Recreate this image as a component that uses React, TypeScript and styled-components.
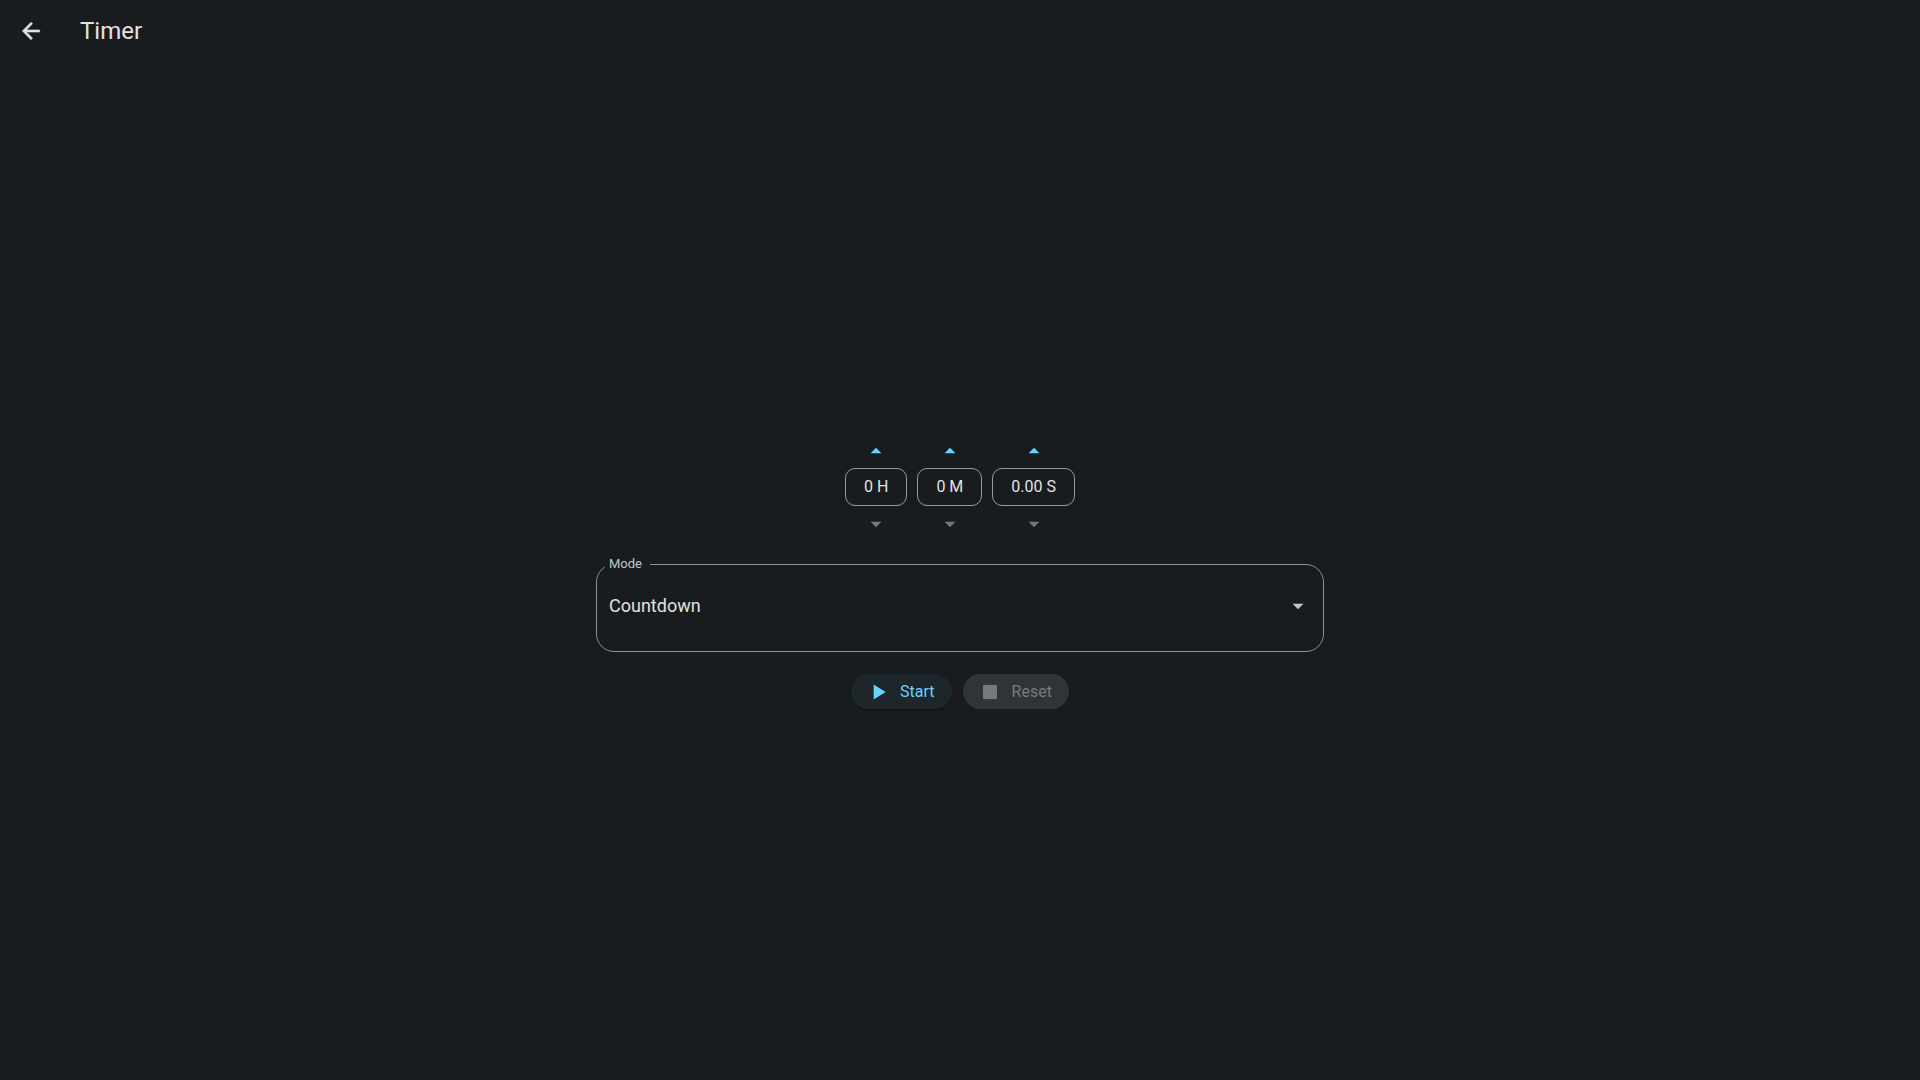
import React, { useState } from "react";
import styled, { createGlobalStyle } from "styled-components";

const GlobalStyle = createGlobalStyle`
  * { box-sizing: border-box; }
  body {
    margin: 0;
    background: #191c1e;
    color: #e1e2e4;
    font-family: Roboto, "Liberation Sans", sans-serif;
  }
  button, select { font: inherit; color: inherit; }
`;

const Page = styled.div`
  min-height: 100vh;
  display: flex;
  flex-direction: column;
`;

const AppBar = styled.header`
  height: 62px;
  padding: 0 18px;
  display: flex;
  align-items: center;
  gap: 36px;
`;

const Title = styled.h1`
  margin: 0;
  font-size: 24px;
  line-height: 32px;
  font-weight: 400;
`;

const IconButton = styled.button`
  display: flex;
  padding: 0;
  border: 0;
  background: none;
  cursor: pointer;
`;

const Content = styled.main`
  flex: 1;
  display: flex;
  flex-direction: column;
  align-items: center;
  justify-content: center;
`;

const Units = styled.div`
  display: flex;
  gap: 10px;
  margin-bottom: 15px;
`;

const Unit = styled.div`
  display: flex;
  flex-direction: column;
  align-items: center;
`;

const StepButton = styled.button`
  width: 36px;
  height: 35px;
  padding: 0;
  border: 0;
  background: none;
  color: #67d3ff;
  display: flex;
  align-items: center;
  justify-content: center;
  cursor: pointer;
  &:disabled { color: #75777a; cursor: default; }
`;

const ValueButton = styled.button`
  height: 38px;
  padding: 0 18px;
  border: 1px solid #949ca0;
  border-radius: 10px;
  background: none;
  font-size: 16px;
  line-height: 20px;
  cursor: pointer;
`;

const Field = styled.fieldset`
  width: 38%;
  min-width: 280px;
  max-width: 728px;
  margin: 0 0 22px;
  padding: 0 8px;
  border: 1px solid #8a9296;
  border-radius: 18px;
  color: #e1e2e4;
`;

const Legend = styled.legend`
  padding: 0 8px 0 4px;
  font-size: 13px;
  line-height: 16px;
  color: #bfc8cc;
`;

const SelectBox = styled.div`
  display: grid;
  align-items: center;
  height: 79px;
  padding-bottom: 12px;
  color: #c3c7c9;
  > * { grid-area: 1 / 1; }
  svg {
    justify-self: end;
    margin-right: 4px;
    pointer-events: none;
  }
`;

const Select = styled.select`
  width: 100%;
  height: 48px;
  padding: 0 4px;
  border: 0;
  background: #191c1e;
  color: #e1e2e4;
  appearance: none;
  font-size: 18px;
  line-height: 24px;
`;

const Actions = styled.div`
  display: flex;
  gap: 11px;
`;

const ActionButton = styled.button`
  height: 35px;
  padding: 0 17px 0 14px;
  border: 0;
  border-radius: 18px;
  display: flex;
  align-items: center;
  gap: 9px;
  background: #1d262b;
  color: #67d3ff;
  font-size: 16px;
  line-height: 20px;
  box-shadow: 0 1px 2px rgba(0, 0, 0, 0.3);
  cursor: pointer;
  &:disabled {
    background: #313436;
    color: #777a7b;
    box-shadow: none;
    cursor: default;
  }
`;

const ICONS = {
  back: "M20 11H7.83l5.59-5.59L12 4l-8 8 8 8 1.41-1.41L7.83 13H20v-2z",
  up: "M7 14l5-5 5 5z",
  down: "M7 10l5 5 5-5z",
  play: "M8 5v14l11-7z",
  stop: "M5.5 5.5h13v13h-13z",
};

function Icon({ name, size = 26 }: { name: keyof typeof ICONS; size?: number }) {
  return (
    <svg width={size} height={size} viewBox="0 0 24 24" fill="currentColor" aria-hidden="true">
      <path
        d={ICONS[name]}
        stroke={name === "back" ? "currentColor" : "none"}
        strokeWidth="0.5"
      />
    </svg>
  );
}

const UNITS = [
  { name: "hours", format: (n: number) => `${n} H` },
  { name: "minutes", format: (n: number) => `${n} M` },
  { name: "seconds", format: (n: number) => `${n.toFixed(2)} S` },
];

export default function App() {
  const [values, setValues] = useState([0, 0, 0]);
  const step = (index: number, by: number) =>
    setValues((old) => old.map((v, i) => (i === index ? v + by : v)));
  const empty = values.every((v) => v === 0);

  return (
    <Page>
      <GlobalStyle />
      <AppBar>
        <IconButton aria-label="Back">
          <Icon name="back" />
        </IconButton>
        <Title>Timer</Title>
      </AppBar>
      <Content>
        <Units>
          {UNITS.map((unit, i) => (
            <Unit key={unit.name}>
              <StepButton aria-label={`Increase ${unit.name}`} onClick={() => step(i, 1)}>
                <Icon name="up" />
              </StepButton>
              <ValueButton>{unit.format(values[i])}</ValueButton>
              <StepButton
                aria-label={`Decrease ${unit.name}`}
                disabled={values[i] === 0}
                onClick={() => step(i, -1)}
              >
                <Icon name="down" />
              </StepButton>
            </Unit>
          ))}
        </Units>
        <Field>
          <Legend>
            <label htmlFor="mode">Mode</label>
          </Legend>
          <SelectBox>
            <Select id="mode" defaultValue="Countdown">
              <option>Countdown</option>
              <option>Stopwatch</option>
            </Select>
            <Icon name="down" />
          </SelectBox>
        </Field>
        <Actions>
          <ActionButton>
            <Icon name="play" />
            Start
          </ActionButton>
          <ActionButton disabled={empty} onClick={() => setValues([0, 0, 0])}>
            <Icon name="stop" />
            Reset
          </ActionButton>
        </Actions>
      </Content>
    </Page>
  );
}
